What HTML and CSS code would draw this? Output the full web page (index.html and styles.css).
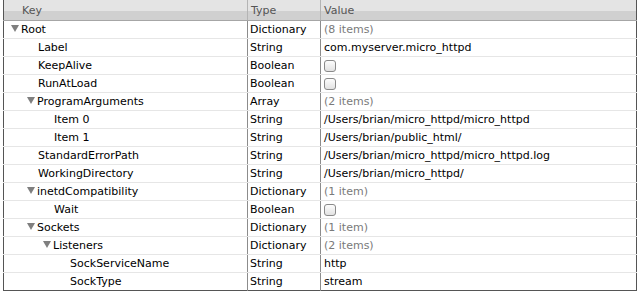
FILE: index.html
```html
<!DOCTYPE html>
<html lang="en">
<head>
  <meta charset="UTF-8" />
  <title>micro_httpd.plist</title>
  <link rel="stylesheet" href="styles.css">
</head>
<body>
  <table class="plist">
    <thead>
      <tr>
        <th class="col-key">Key</th>
        <th class="col-type">Type</th>
        <th class="col-value">Value</th>
      </tr>
    </thead>
    <tbody>
      <tr>
        <td class="key lvl-0"><span class="tri"></span>Root</td>
        <td>Dictionary</td>
        <td class="val count">(8 items)</td>
      </tr>
      <tr>
        <td class="key lvl-1">Label</td>
        <td>String</td>
        <td class="val">com.myserver.micro_httpd</td>
      </tr>
      <tr>
        <td class="key lvl-1">KeepAlive</td>
        <td>Boolean</td>
        <td class="val"><span class="check"></span></td>
      </tr>
      <tr>
        <td class="key lvl-1">RunAtLoad</td>
        <td>Boolean</td>
        <td class="val"><span class="check"></span></td>
      </tr>
      <tr>
        <td class="key lvl-1"><span class="tri"></span>ProgramArguments</td>
        <td>Array</td>
        <td class="val count">(2 items)</td>
      </tr>
      <tr>
        <td class="key lvl-2">Item 0</td>
        <td>String</td>
        <td class="val">/Users/brian/micro_httpd/micro_httpd</td>
      </tr>
      <tr>
        <td class="key lvl-2">Item 1</td>
        <td>String</td>
        <td class="val">/Users/brian/public_html/</td>
      </tr>
      <tr>
        <td class="key lvl-1">StandardErrorPath</td>
        <td>String</td>
        <td class="val">/Users/brian/micro_httpd/micro_httpd.log</td>
      </tr>
      <tr>
        <td class="key lvl-1">WorkingDirectory</td>
        <td>String</td>
        <td class="val">/Users/brian/micro_httpd/</td>
      </tr>
      <tr>
        <td class="key lvl-1"><span class="tri"></span>inetdCompatibility</td>
        <td>Dictionary</td>
        <td class="val count">(1 item)</td>
      </tr>
      <tr>
        <td class="key lvl-2">Wait</td>
        <td>Boolean</td>
        <td class="val"><span class="check"></span></td>
      </tr>
      <tr>
        <td class="key lvl-1"><span class="tri"></span>Sockets</td>
        <td>Dictionary</td>
        <td class="val count">(1 item)</td>
      </tr>
      <tr>
        <td class="key lvl-2"><span class="tri"></span>Listeners</td>
        <td>Dictionary</td>
        <td class="val count">(2 items)</td>
      </tr>
      <tr>
        <td class="key lvl-3">SockServiceName</td>
        <td>String</td>
        <td class="val">http</td>
      </tr>
      <tr class="last">
        <td class="key lvl-3">SockType</td>
        <td>String</td>
        <td class="val">stream</td>
      </tr>
    </tbody>
  </table>
</body>
</html>
```

FILE: styles.css
```css
body {
  margin: 0;
  padding: 0;
  background: white;
  font-family: "DejaVu Sans", "Liberation Sans", sans-serif;
  font-size: 11px;
  color: #000;
}

.plist {
  margin-left: 3px;
  width: 634px;
  border-collapse: collapse;
  table-layout: fixed;
  border-left: 1px solid #555;
  border-right: 1px solid #555;
  border-bottom: 1px solid #555;
}

.plist th {
  height: 20px;
  padding: 0 0 0 3px;
  text-align: left;
  font-weight: normal;
  color: #555;
  background: linear-gradient(#e4e4e4 0, #e4e4e4 55%, #d0d0d0 55%, #d0d0d0 100%);
  border-bottom: 1px solid #a6a6a6;
  border-left: 1px solid #b4b4b4;
  vertical-align: middle;
}

.plist th.col-key {
  width: 225px;
  padding-left: 18px;
  border-left: none;
}

.plist th.col-type {
  width: 69px;
}

.plist td {
  height: 17px;
  padding: 0 0 0 2px;
  border-bottom: 1px solid #e6e6e6;
  border-left: 1px solid #8c8c8c;
  white-space: nowrap;
  vertical-align: middle;
}

.plist td.key {
  border-left: none;
}

.plist td.val {
  padding-left: 3px;
}

.plist tr.last td {
  border-bottom: none;
}

.lvl-0 { padding-left: 18px !important; }
.lvl-1 { padding-left: 34px !important; }
.lvl-2 { padding-left: 50px !important; }
.lvl-3 { padding-left: 66px !important; }

.tri {
  display: inline-block;
  width: 0;
  height: 0;
  margin-left: -11px;
  margin-right: 2px;
  border-left: 4.5px solid transparent;
  border-right: 4.5px solid transparent;
  border-top: 7px solid #7f7f7f;
  vertical-align: 1px;
}

.count {
  color: #7a7a7a;
}

.check {
  display: inline-block;
  width: 10px;
  height: 10px;
  border: 1px solid #8a8a8a;
  border-radius: 3px;
  background: linear-gradient(#fdfdfd, #e2e2e2);
  vertical-align: middle;
}
```
